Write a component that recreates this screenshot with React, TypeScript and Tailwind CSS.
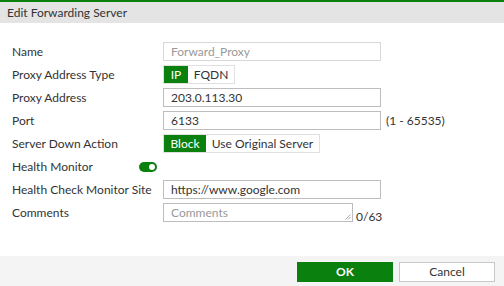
const green = "bg-[#0a800f]";

const Row = ({ label, children }: { label: string; children?: React.ReactNode }) => (
  <div className="flex items-center h-[19px]">
    <div className="w-[163px] pl-3 shrink-0 text-[#333] whitespace-nowrap">{label}</div>
    {children}
  </div>
);

const App = () => {
  return (
    <div className="w-[504px] h-[286px] bg-white flex flex-col text-[12px] text-[#333] font-['Lato','Liberation_Sans',sans-serif] overflow-hidden">
      {/* HEADER */}
      <div className="h-[23px] border-t-2 border-[#0a800f] bg-[#e4e4e4] flex items-center pl-[7px] text-[#333]">
        Edit Forwarding Server
      </div>

      {/* FORM */}
      <div className="flex-1 flex flex-col gap-[4px] pt-[19px]">
        <Row label="Name">
          <div className="w-[218px] h-[19px] border border-[#d8d8d8] px-[7px] flex items-center text-[#999]">Forward_Proxy</div>
        </Row>
        <Row label="Proxy Address Type">
          <div className="flex h-[19px] border border-[#e0e0e0]">
            <div className={`${green} text-white w-[24px] flex items-center justify-center`}>IP</div>
            <div className="w-[46px] flex items-center justify-center">FQDN</div>
          </div>
        </Row>
        <Row label="Proxy Address">
          <div className="w-[218px] h-[19px] border border-[#bdbdbd] px-[7px] flex items-center">203.0.113.30</div>
        </Row>
        <Row label="Port">
          <div className="w-[218px] h-[19px] border border-[#bdbdbd] px-[7px] flex items-center">6133</div>
          <span className="ml-[5px]">(1 - 65535)</span>
        </Row>
        <Row label="Server Down Action">
          <div className="flex h-[19px] border border-[#e0e0e0]">
            <div className={`${green} text-white w-[42px] flex items-center justify-center`}>Block</div>
            <div className="w-[113px] flex items-center justify-center">Use Original Server</div>
          </div>
        </Row>
        <div className="flex items-center h-[19px]">
          <div className="w-[139px] pl-3 shrink-0">Health Monitor</div>
          <div className={`${green} w-[18px] h-[10px] rounded-full flex items-center justify-end pr-[2px]`}>
            <div className="w-[6px] h-[6px] rounded-full bg-white" />
          </div>
        </div>
        <Row label="Health Check Monitor Site">
          <div className="w-[218px] h-[19px] border border-[#bdbdbd] px-[7px] flex items-center">https://www.google.com</div>
        </Row>
        <div className="flex items-end h-[19px]">
          <div className="w-[163px] pl-3 shrink-0 self-center">Comments</div>
          <div className="relative w-[190px] h-[19px] border border-[#bdbdbd] px-[7px] flex items-center text-[#999]">
            Comments
            <svg className="absolute right-[1px] bottom-[1px]" width="6" height="6" viewBox="0 0 6 6">
              <path d="M5.5 0.5 L0.5 5.5 M5.5 3 L3 5.5" stroke="#999" strokeWidth="0.8" fill="none" />
            </svg>
          </div>
          <span className="ml-[3px] leading-none mb-[-1px]">0/63</span>
        </div>
      </div>

      {/* FOOTER */}
      <div className="h-[30px] bg-[#f4f4f4] flex items-start justify-end gap-[6px] pt-[6px] pr-[9px]">
        <button className={`${green} w-[96px] h-[20px] text-white font-bold flex items-center justify-center`}>OK</button>
        <button className="w-[96px] h-[20px] bg-white border border-[#c8c8c8] flex items-center justify-center">Cancel</button>
      </div>
    </div>
  );
};

export default App;
